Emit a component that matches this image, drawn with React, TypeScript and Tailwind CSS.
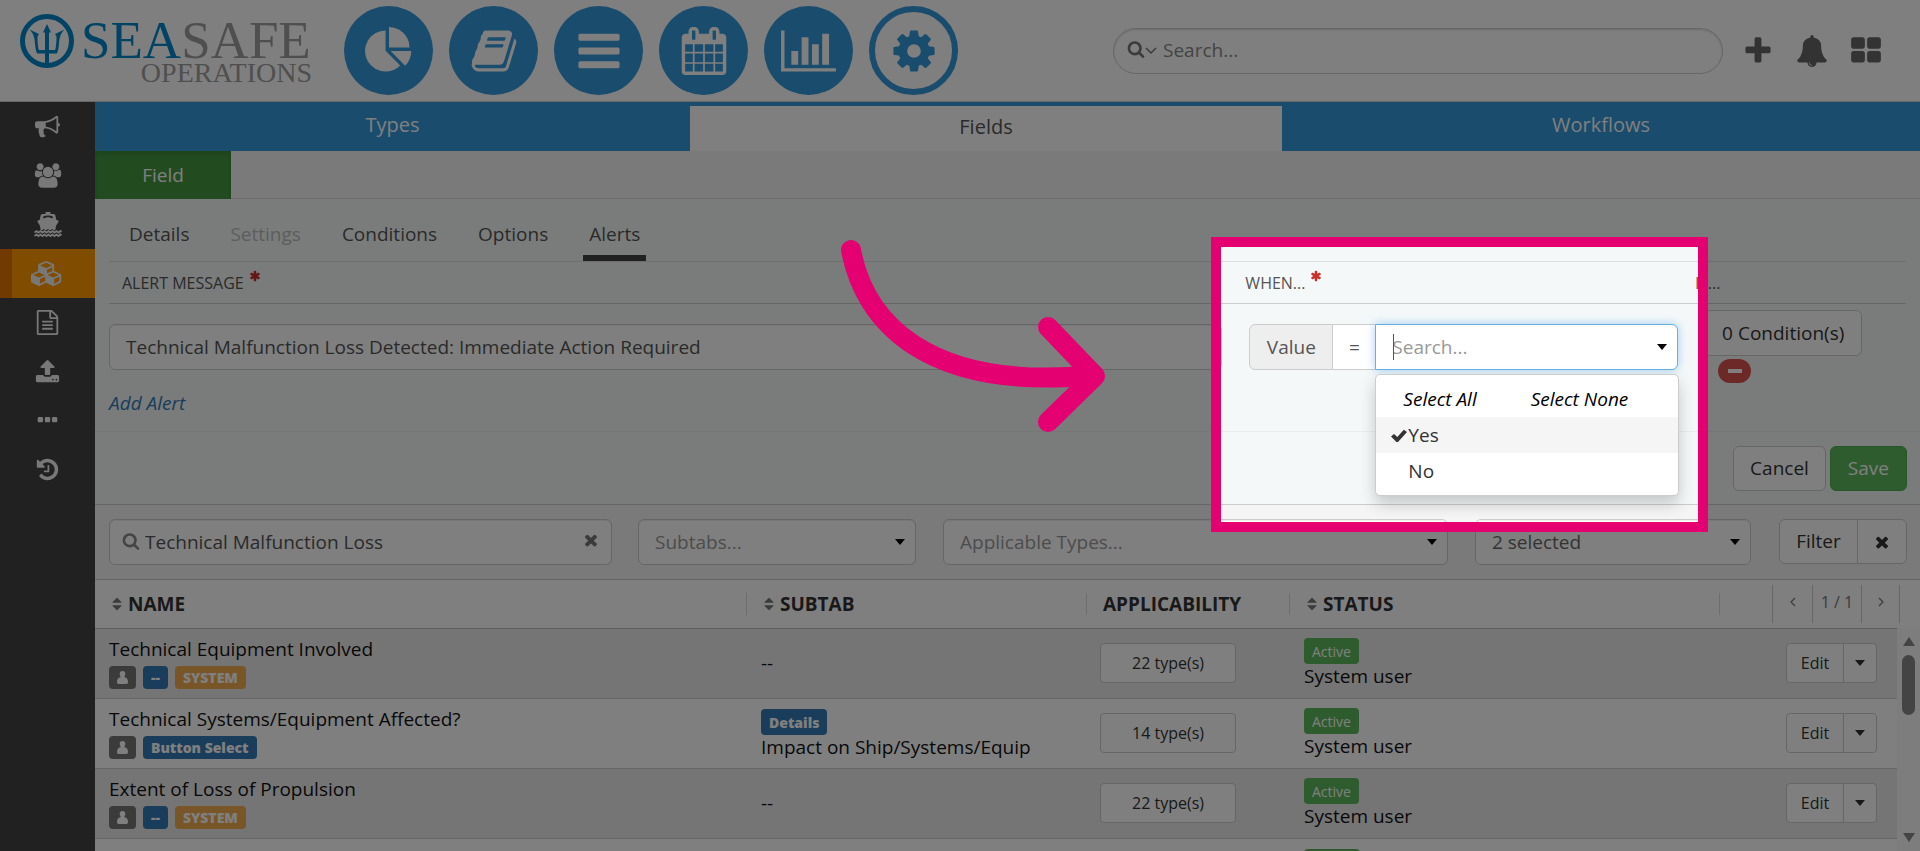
import React from "react";

const ICONS = {
  pie: "M768 890l546 546q-106 108-247.5 168t-298.5 60q-209 0-385.5-103t-279.5-279.5-103-385.5 103-385.5 279.5-279.5 385.5-103v762zm187 6h773q0 157-60 298.5t-168 247.5zm709-128h-768v-768q209 0 385.5 103t279.5 279.5 103 385.5z",
  book: "M1703 478q40 57 18 129l-275 906q-19 64-76.5 107.5t-122.5 43.5h-923q-77 0-148.5-53.5t-99.5-131.5q-24-67-2-127 0-4 3-27t4-37q1-8-3-21.5t-3-19.5q2-11 8-21t16.5-23.5 16.5-23.5q23-38 45-91.5t30-91.5q3-10 .5-30t-.5-28q3-11 17-28t17-23q21-36 42-92t25-90q1-9-2.5-32t.5-28q4-13 22-30.5t22-22.5q19-26 42.5-84.5t27.5-96.5q1-8-3-25.5t-2-26.5q2-8 9-18t18-23 17-21q8-12 16.5-30.5t15-35 16-36 19.5-32 26.5-23.5 36-11.5 47.5 5.5l-1 3q38-9 51-9h761q74 0 114 56t18 130l-274 906q-36 119-71.5 153.5t-128.5 34.5h-869q-27 0-38 15-11 16-1 43 24 70 144 70h923q29 0 56-15.5t35-41.5l300-987q7-22 5-57 38 15 59 43zm-1064 2q-4 13 2 22.5t20 9.5h608q13 0 25.5-9.5t16.5-22.5l21-64q4-13-2-22.5t-20-9.5h-608q-13 0-25.5 9.5t-16.5 22.5zm-83 256q-4 13 2 22.5t20 9.5h608q13 0 25.5-9.5t16.5-22.5l21-64q4-13-2-22.5t-20-9.5h-608q-13 0-25.5 9.5t-16.5 22.5z",
  bars: "M1664 1344v128q0 26-19 45t-45 19h-1408q-26 0-45-19t-19-45v-128q0-26 19-45t45-19h1408q26 0 45 19t19 45zm0-512v128q0 26-19 45t-45 19h-1408q-26 0-45-19t-19-45v-128q0-26 19-45t45-19h1408q26 0 45 19t19 45zm0-512v128q0 26-19 45t-45 19h-1408q-26 0-45-19t-19-45v-128q0-26 19-45t45-19h1408q26 0 45 19t19 45z",
  calendar: "M192 1664h288v-288h-288v288zm352 0h320v-288h-320v288zm-352-352h288v-320h-288v320zm352 0h320v-320h-320v320zm-352-384h288v-288h-288v288zm736 736h320v-288h-320v288zm-384-736h320v-288h-320v288zm768 736h288v-288h-288v288zm-384-352h320v-320h-320v320zm-352-864v-288q0-13-9.5-22.5t-22.5-9.5h-64q-13 0-22.5 9.5t-9.5 22.5v288q0 13 9.5 22.5t22.5 9.5h64q13 0 22.5-9.5t9.5-22.5zm736 864h288v-320h-288v320zm-384-384h320v-288h-320v288zm384 0h288v-288h-288v288zm32-480v-288q0-13-9.5-22.5t-22.5-9.5h-64q-13 0-22.5 9.5t-9.5 22.5v288q0 13 9.5 22.5t22.5 9.5h64q13 0 22.5-9.5t9.5-22.5zm384-64v1280q0 52-38 90t-90 38h-1408q-52 0-90-38t-38-90v-1280q0-52 38-90t90-38h128v-96q0-66 47-113t113-47h64q66 0 113 47t47 113v96h384v-96q0-66 47-113t113-47h64q66 0 113 47t47 113v96h128q52 0 90 38t38 90z",
  chart: "M640 896v512h-256v-512h256zm384-512v1024h-256v-1024h256zm1024 1152v128h-2048v-1536h128v1408h1920zm-640-896v768h-256v-768h256zm384-384v1152h-256v-1152h256z",
  cog: "M1152 896q0-106-75-181t-181-75-181 75-75 181 75 181 181 75 181-75 75-181zm512-109v222q0 12-8 23t-20 13l-185 28q-19 54-39 91 35 50 107 138 10 12 10 25t-9 23q-27 37-99 108t-94 71q-12 0-26-9l-138-108q-44 23-91 38-16 136-29 186-7 28-36 28h-222q-14 0-24.5-8.5t-11.5-21.5l-28-184q-49-16-90-37l-141 107q-10 9-25 9-14 0-25-11-126-114-165-168-7-10-7-23 0-12 8-23 15-21 51-66.5t54-70.5q-27-50-41-99l-183-27q-13-2-21-12.5t-8-23.5v-222q0-12 8-23t19-13l186-28q14-46 39-92-40-57-107-138-10-12-10-24 0-10 9-23 26-36 98.5-107.5t94.5-71.5q13 0 26 10l138 107q44-23 91-38 16-136 29-186 7-28 36-28h222q14 0 24.5 8.5t11.5 21.5l28 184q49 16 90 37l142-107q9-9 24-9 13 0 25 10 129 119 165 170 7 8 7 22 0 12-8 23-15 21-51 66.5t-54 70.5q26 50 41 98l183 28q13 2 21 12.5t8 23.5z",
  search: "M1216 832q0-185-131.5-316.5t-316.5-131.5-316.5 131.5-131.5 316.5 131.5 316.5 316.5 131.5 316.5-131.5 131.5-316.5zm512 832q0 52-38 90t-90 38q-54 0-90-38l-343-342q-179 124-399 124-143 0-273.5-55.5t-225-150-150-225-55.5-273.5 55.5-273.5 150-225 225-150 273.5-55.5 273.5 55.5 225 150 150 225 55.5 273.5q0 220-124 399l343 343q37 37 37 90z",
  plus: "M1600 736v192q0 40-28 68t-68 28h-416v416q0 40-28 68t-68 28h-192q-40 0-68-28t-28-68v-416h-416q-40 0-68-28t-28-68v-192q0-40 28-68t68-28h416v-416q0-40 28-68t68-28h192q40 0 68 28t28 68v416h416q40 0 68 28t28 68z",
  bell: "M912 1696q0-16-16-16-59 0-101.5-42.5t-42.5-101.5q0-16-16-16t-16 16q0 73 51.5 124.5t124.5 51.5q16 0 16-16zm816-288q0 52-38 90t-90 38h-448q0 106-75 181t-181 75-181-75-75-181h-448q-52 0-90-38t-38-90q50-42 91-88t85-119.5 74.5-158.5 50-206 19.5-260q0-152 117-282.5t307-158.5q-8-19-8-39 0-40 28-68t68-28 68 28 28 68q0 20-8 39 190 28 307 158.5t117 282.5q0 139 19.5 260t50 206 74.5 158.5 85 119.5 91 88z",
  grid: "M832 1024v384q0 52-38 90t-90 38h-512q-52 0-90-38t-38-90v-384q0-52 38-90t90-38h512q52 0 90 38t38 90zm0-768v384q0 52-38 90t-90 38h-512q-52 0-90-38t-38-90v-384q0-52 38-90t90-38h512q52 0 90 38t38 90zm896 768v384q0 52-38 90t-90 38h-512q-52 0-90-38t-38-90v-384q0-52 38-90t90-38h512q52 0 90 38t38 90zm0-768v384q0 52-38 90t-90 38h-512q-52 0-90-38t-38-90v-384q0-52 38-90t90-38h512q52 0 90 38t38 90z",
  bullhorn: "M1664 640q53 0 90.5 37.5t37.5 90.5-37.5 90.5-90.5 37.5v384q0 52-38 90t-90 38q-417-347-812-380-58 19-91 66t-31 100.5 40 92.5q-20 33-23 65.5t6 58 33.5 55 48 50 61.5 50.5q-29 58-111.5 83t-168.5 11.5-132-55.5q-7-23-29.5-87.5t-32-94.5-23-89-15-101 3.5-98.5 22-110.5h-122q-66 0-113-47t-47-113v-192q0-66 47-113t113-47h480q435 0 896-384 52 0 90 38t38 90v384zm-128 604v-954q-394 302-768 343v270q377 42 768 341z",
  users: "M657 896q-162 5-265 128h-134q-82 0-138-40.5t-56-118.5q0-353 124-353 6 0 43.5 21t97.5 42.5 119 21.5q67 0 133-23-5 37-5 66 0 159 93 293zm1071 637q0 120-73 189.5t-194 69.5h-874q-121 0-194-69.5t-73-189.5q0-53 3.5-103.5t14-109 26.5-108.5 43-97.5 62-81 85.5-53.5 111.5-20q10 0 43 21.5t73 48 107 48 135 21.5 135-21.5 107-48 73-48 43-21.5q61 0 111.5 20t85.5 53.5 62 81 43 97.5 26.5 108.5 14 109 3.5 103.5zm-1024-1277q0 106-75 181t-181 75-181-75-75-181 75-181 181-75 181 75 75 181zm704 384q0 159-112.5 271.5t-271.5 112.5-271.5-112.5-112.5-271.5 112.5-271.5 271.5-112.5 271.5 112.5 112.5 271.5zm576 225q0 78-56 118.5t-138 40.5h-134q-103-123-265-128 93-134 93-293 0-29-5-66 66 23 133 23 59 0 119-21.5t97.5-42.5 43.5-21q124 0 124 353zm-128-609q0 106-75 181t-181 75-181-75-75-181 75-181 181-75 181 75 75 181z",
  cubes: "M640 1632l384-192v-314l-384 164v342zm-64-454l404-173-404-173-404 173zm1088 454l384-192v-314l-384 164v342zm-64-454l404-173-404-173-404 173zm-448-293l384-165v-266l-384 164v267zm-64-379l441-189-441-189-441 189zm1088 518v416q0 36-19 67t-52 47l-448 224q-25 14-57 14t-57-14l-448-224q-4-2-7-4-2 2-7 4l-448 224q-25 14-57 14t-57-14l-448-224q-33-16-52-47t-19-67v-416q0-38 21.5-70t56.5-48l434-186v-400q0-38 21.5-70t56.5-48l448-192q23-10 50-10t50 10l448 192q35 16 56.5 48t21.5 70v400l434 186q36 16 57 48t21 70z",
  file: "M1596 380q28 28 48 76t20 88v1152q0 40-28 68t-68 28h-1344q-40 0-68-28t-28-68v-1600q0-40 28-68t68-28h896q40 0 88 20t76 48zm-444-244v376h376q-10-29-22-41l-313-313q-12-12-41-22zm384 1528v-1024h-416q-40 0-68-28t-28-68v-416h-768v1536h1280zm-1024-864q0-14 9-23t23-9h704q14 0 23 9t9 23v64q0 14-9 23t-23 9h-704q-14 0-23-9t-9-23v-64zm736 224q14 0 23 9t9 23v64q0 14-9 23t-23 9h-704q-14 0-23-9t-9-23v-64q0-14 9-23t23-9h704zm0 256q14 0 23 9t9 23v64q0 14-9 23t-23 9h-704q-14 0-23-9t-9-23v-64q0-14 9-23t23-9h704z",
  upload: "M1344 1472q0-26-19-45t-45-19-45 19-19 45 19 45 45 19 45-19 19-45zm256 0q0-26-19-45t-45-19-45 19-19 45 19 45 45 19 45-19 19-45zm128-224v320q0 40-28 68t-68 28h-1472q-40 0-68-28t-28-68v-320q0-40 28-68t68-28h427q21 56 70.5 92t110.5 36h256q61 0 110.5-36t70.5-92h427q40 0 68 28t28 68zm-325-648q-17 40-59 40h-256v448q0 26-19 45t-45 19h-256q-26 0-45-19t-19-45v-448h-256q-42 0-59-40-17-39 14-69l448-448q18-19 45-19t45 19l448 448q31 30 14 69z",
  dots: "M576 736v192q0 40-28 68t-68 28h-192q-40 0-68-28t-28-68v-192q0-40 28-68t68-28h192q40 0 68 28t28 68zm512 0v192q0 40-28 68t-68 28h-192q-40 0-68-28t-28-68v-192q0-40 28-68t68-28h192q40 0 68 28t28 68zm512 0v192q0 40-28 68t-68 28h-192q-40 0-68-28t-28-68v-192q0-40 28-68t68-28h192q40 0 68 28t28 68z",
  history: "M1664 896q0 156-61 298t-164 245-245 164-298 61q-172 0-327-72.5t-264-204.5q-7-10-6.5-22.5t8.5-20.5l137-138q10-9 25-9 16 2 23 12 73 95 179 147t225 52q104 0 198.5-40.5t163.5-109.5 109.5-163.5 40.5-198.5-40.5-198.5-109.5-163.5-163.5-109.5-198.5-40.5q-98 0-188 35.5t-160 101.5l137 138q31 30 14 69-17 40-59 40h-448q-26 0-45-19t-19-45v-448q0-42 40-59 39-17 69 14l130 129q107-101 244.5-156.5t284.5-55.5q156 0 298 61t245 164 164 245 61 298zm-640-288v448q0 14-9 23t-23 9h-320q-14 0-23-9t-9-23v-64q0-14 9-23t23-9h224v-352q0-14 9-23t23-9h64q14 0 23 9t9 23z",
  times: "M1490 1322q0 40-28 68l-136 136q-28 28-68 28t-68-28l-294-294-294 294q-28 28-68 28t-68-28l-136-136q-28-28-28-68t28-68l294-294-294-294q-28-28-28-68t28-68l136-136q28-28 68-28t68 28l294 294 294-294q28-28 68-28t68 28l136 136q28 28 28 68t-28 68l-294 294 294 294q28 28 28 68z",
  asterisk: "M1546 1050q46 26 59.5 77.5t-12.5 97.5l-64 110q-26 46-77.5 59.5t-97.5-12.5l-266-153v307q0 52-38 90t-90 38h-128q-52 0-90-38t-38-90v-307l-266 153q-46 26-97.5 12.5t-77.5-59.5l-64-110q-26-46-12.5-97.5t59.5-77.5l266-154-266-154q-46-26-59.5-77.5t12.5-97.5l64-110q26-46 77.5-59.5t97.5 12.5l266 153v-307q0-52 38-90t90-38h128q52 0 90 38t38 90v307l266-153q46-26 97.5-12.5t77.5 59.5l64 110q26 46 12.5 97.5t-59.5 77.5l-266 154z",
  sort: "M1408 1088q0 26-19 45l-448 448q-19 19-45 19t-45-19l-448-448q-19-19-19-45t19-45 45-19h896q26 0 45 19t19 45zm0-384q0 26-19 45t-45 19h-896q-26 0-45-19t-19-45 19-45l448-448q19-19 45-19t45 19l448 448q19 19 19 45z",
};

const Icon = ({ name, w = 1792, className }: { name: keyof typeof ICONS; w?: number; className: string }) => (
  <svg viewBox={`0 0 ${w} 1792`} className={className} fill="currentColor" aria-hidden="true">
    <path d={ICONS[name]} />
  </svg>
);

const Caret = ({ className = "" }: { className?: string }) => (
  <svg viewBox="0 0 10 6" className={`w-[10px] h-[6px] ${className}`} fill="currentColor" aria-hidden="true">
    <path d="M0 0h10L5 6z" />
  </svg>
);

const Ship = () => (
  <svg viewBox="0 0 28 26" className="w-[28px] h-[26px]" fill="currentColor" aria-hidden="true">
    <path d="M11.500 0h5v2h3c1 0 1.700.6 1.900 1.500l.8 4.200 1.800.7c.6.300.8.9.4 1.500l-1.900 3.100c-.8 1.400-.9 2.800-.9 4.500l-1.400 1-2-1.500-2.100 1.500-2.100-1.500-2.100 1.500-2.100-1.500-2 1.500-1.400-1c0-1.700-.1-3.100-.9-4.500L3.600 9.900c-.4-.6-.2-1.200.4-1.500l1.800-.7.8-4.200C6.800 2.600 7.500 2 8.500 2h3zM9.500 4.300L9 6.600 14 5l5 1.600-.5-2.300C15.500 3.300 12.500 3.300 9.500 4.300z" />
    <path d="M.5 20.500l2-1.500 2 1.500 2-1.500 2 1.500 2-1.500 2 1.500 2-1.500 2 1.500 2-1.500 2 1.500 2-1.500 2 1.500 2-1.500 1 .8M.5 24l2-1.500 2 1.500 2-1.500 2 1.500 2-1.500 2 1.500 2-1.500 2 1.500 2-1.500 2 1.500 2-1.500 2 1.500 2-1.500 1 .8" fill="none" stroke="currentColor" strokeWidth="1.800" />
  </svg>
);

const Logo = () => (
  <svg viewBox="0 4 300 84" className="w-[300px] h-[84px] shrink-0" role="img" aria-label="Seasafe Operations">
    <circle cx="33" cy="36" r="24.500" fill="#fff" stroke="#0086c8" strokeWidth="5" />
    <g fill="#0086c8">
      <path d="M33 19l4 8.500h-2V59h-4V27.500h-2z" />
      <path d="M15.500 24.500L25 29l-1.500 2.500c0 5.500.3 9.500 1.300 13.500h6.700v3.500H23c-1.300-3.500-1.700-6.500-2-10-.5-6-1.500-10-5.500-14zM50.500 24.500L41 29l1.500 2.500c0 5.500-.3 9.500-1.300 13.500h-6.700v3.500H43c1.300-3.500 1.700-6.500 2-10 .5-6 1.500-10 5.500-14z" />
    </g>
    <text x="67" y="53" fontSize="53" fontFamily="'Liberation Serif', serif" fill="#0086c8">SEA<tspan fill="#9f9f9f">SAFE</tspan></text>
    <text x="298" y="77" fontSize="28" textAnchor="end" fontFamily="'Liberation Serif', serif" fill="#9f9f9f">OPERATIONS</text>
  </svg>
);

const circle = "w-[89px] h-[89px] rounded-full flex items-center justify-center bg-[#3498db] text-white";
const button = "border border-[#ccc] bg-white text-[#333]";
const field = "w-full h-[46px] rounded-[6px] border border-[#ccc] bg-white text-[#555] shadow-[inset_0_1px_1px_rgba(0,0,0,0.075)] outline-none placeholder:text-[#999]";
const badge = "inline-flex items-center rounded-[4px] px-2 text-[14px] font-extrabold text-white";

const Header = () => (
  <header className="h-[102px] shrink-0 flex items-center bg-white border-b border-[#ccc] pl-[14px] pr-[38px]">
    <Logo />
    <nav className="flex gap-4 ml-[30px]">
      <button className={circle} aria-label="Dashboard"><Icon name="pie" className="w-12 h-12" /></button>
      <button className={circle} aria-label="Logbook"><Icon name="book" className="w-12 h-12" /></button>
      <button className={circle} aria-label="Lists"><Icon name="bars" className="w-12 h-12" /></button>
      <button className={circle} aria-label="Calendar"><Icon name="calendar" className="w-12 h-12" /></button>
      <button className={circle} aria-label="Reports"><Icon name="chart" w={2048} className="w-[55px] h-12" /></button>
      <button className="w-[89px] h-[89px] rounded-full flex items-center justify-center border-[6px] border-[#3498db] text-[#3498db]" aria-label="Settings">
        <Icon name="cog" className="w-12 h-12" />
      </button>
    </nav>
    <label className="ml-auto w-[610px] h-[46px] rounded-full border border-[#ccc] shadow-[inset_0_1px_2px_rgba(0,0,0,0.15)] flex items-center px-[13px] text-[#777]">
      <Icon name="search" className="w-[18px] h-[18px] mb-1" />
      <svg viewBox="0 0 12 8" className="w-3 h-2 mr-[6px]" fill="none" stroke="currentColor" strokeWidth="1.500" aria-hidden="true"><path d="M1 1l5 5 5-5" /></svg>
      <input type="text" aria-label="Search" placeholder="Search..." className="flex-1 outline-none placeholder:text-[#888]" />
    </label>
    <div className="flex items-center gap-[22px] ml-[19px] text-[#666]">
      <button aria-label="Add"><Icon name="plus" className="w-8 h-8" /></button>
      <button aria-label="Notifications"><Icon name="bell" className="w-8 h-8" /></button>
      <button aria-label="Apps"><Icon name="grid" className="w-8 h-8" /></button>
    </div>
  </header>
);

const side = "h-[49px] w-full flex items-center justify-center";

const Sidebar = () => (
  <nav className="w-[95px] shrink-0 bg-[#424242] text-[#f0f0f0]">
    <a href="#" className={side} aria-label="Announcements"><Icon name="bullhorn" className="w-[25px] h-[25px]" /></a>
    <a href="#" className={side} aria-label="Users"><Icon name="users" w={2048} className="w-[28px] h-[25px]" /></a>
    <a href="#" className={side} aria-label="Vessels"><Ship /></a>
    <a href="#" className="h-[49px] w-full flex items-center justify-center border-l-[12px] border-[#e47200] bg-[#ff9900] pr-[14px]" aria-label="Modules">
      <Icon name="cubes" w={2304} className="w-[32px] h-[25px]" />
    </a>
    <a href="#" className={side} aria-label="Documents"><Icon name="file" className="w-[25px] h-[25px]" /></a>
    <a href="#" className={side} aria-label="Upload"><Icon name="upload" className="w-[25px] h-[25px]" /></a>
    <a href="#" className={side} aria-label="More"><Icon name="dots" className="w-[25px] h-[25px]" /></a>
    <a href="#" className={side} aria-label="History"><Icon name="history" className="w-[25px] h-[25px]" /></a>
  </nav>
);

const Required = () => <Icon name="asterisk" className="w-3 h-3 ml-[5px] mb-[14px]" />;

const ValueSelect = () => (
  <div className="relative flex h-[46px] text-[#555]">
    <span className="w-[84px] flex items-center justify-center rounded-l-[6px] border border-[#ccc] bg-[#eee]">Value</span>
    <span className="w-[42px] flex items-center justify-center border-y border-[#ccc] bg-white">=</span>
    <div className="relative flex-1">
      <input
        type="text"
        aria-label="Value"
        placeholder="Search..."
        className="w-full h-full rounded-r-[6px] border border-[#66afe9] bg-white pl-4 outline-none placeholder:text-[#999] shadow-[0_0_10px_rgba(102,175,233,0.6)]"
      />
      <span className="absolute left-[18px] top-[10px] w-px h-[26px] bg-[#555]"></span>
      <Caret className="absolute right-[11px] top-5 text-black" />
      <div className="absolute left-0 top-[50px] -right-px h-[122px] rounded-[5px] border border-[#ccc] bg-white pt-[6px] text-[#333] shadow-[0_8px_16px_rgba(0,0,0,0.2)]">
        <div className="h-[36px] flex items-center italic text-black pl-[27px] gap-[54px]">
          <button>Select All</button>
          <button>Select None</button>
        </div>
        <ul>
          <li className="h-[36px] flex items-center bg-[#f5f5f5] pl-[14px]">
            <svg viewBox="0 0 18 16" className="w-[18px] h-4" fill="currentColor" aria-hidden="true"><path d="M1 9.500l3-2.600 3.300 3.100 6.500-7.200L17 5l-9 10H6.500z" /></svg>
            Yes
          </li>
          <li className="h-[36px] flex items-center pl-[32px]">No</li>
        </ul>
      </div>
    </div>
  </div>
);

const cols = "grid grid-cols-[1125fr_450fr_223fr]";
const tab = "h-[48px] px-[6px] border-b-[6px]";

const AlertForm = () => (
  <section className="shrink-0 bg-[#f4f8f9] border-b border-[#ccc]">
    <div className="px-[14px]">
      <div className="h-[63px] flex items-end gap-[29px] border-b border-[#ddd] pl-[14px] text-[#555]">
        <button className={`${tab} border-transparent`}>Details</button>
        <button className={`${tab} border-transparent text-[#bbb]`} disabled>Settings</button>
        <button className={`${tab} border-transparent`}>Conditions</button>
        <button className={`${tab} border-transparent`}>Options</button>
        <button className={`${tab} border-[#424242]`}>Alerts</button>
      </div>
      <div className={`${cols} h-[42px] border-b border-[#ccc] text-[16px] text-[#555]`}>
        <span className="flex items-center pl-[13px]">ALERT MESSAGE<span className="text-[#c9302c]"><Required /></span></span>
        <span className="flex items-center pl-3">WHEN...<span className="text-[#c9302c]"><Required /></span></span>
        <span className="flex items-center pl-3">IF...</span>
      </div>
      <div className={`${cols} pt-5 h-[86px]`}>
        <div className="pr-[11px]">
          <input type="text" aria-label="Alert message" defaultValue="Technical Malfunction Loss Detected: Immediate Action Required" className={`${field} px-4`} />
        </div>
        <div className="pl-4 pr-[5px]"><ValueSelect /></div>
        <div className="pl-[21px] -mt-[14px]">
          <button className={`${button} h-[46px] rounded-[6px] px-[17px]`}>0 Condition(s)</button>
          <button className="ml-[14px] mt-[3px] w-[33px] h-[24px] rounded-full bg-[#d9534f] flex items-center justify-center" aria-label="Remove alert">
            <span className="w-[14px] h-1 bg-white"></span>
          </button>
        </div>
      </div>
      <a href="#" className="block h-[41px] leading-[26px] italic text-[#337ab7]">Add Alert</a>
    </div>
    <div className="h-[73px] border-t border-[#e9edee] flex items-start justify-end gap-1 px-[13px] pt-[14px]">
      <button className={`${button} h-[45px] rounded-[6px] px-4`}>Cancel</button>
      <button className="h-[45px] rounded-[6px] px-[17px] bg-[#5cb85c] border border-[#4cae4c] text-white">Save</button>
    </div>
  </section>
);

const Drop = ({ label, className, tone }: { label: string; className: string; tone: string }) => (
  <div className={`relative ${className}`}>
    <select aria-label={label} className={`${field} ${tone} appearance-none px-4`}>
      <option>{label}</option>
    </select>
    <Caret className="absolute right-[11px] top-5 text-black pointer-events-none" />
  </div>
);

const Filters = () => (
  <form className="h-[75px] shrink-0 flex items-start bg-[#f5f5f5] border-b border-[#ccc] pt-[14px] pl-[14px] pr-[13px]">
    <div className="relative flex-[503] mr-[26px]">
      <Icon name="search" className="absolute left-[13px] top-[13px] w-[18px] h-[18px] text-[#888]" />
      <input type="text" aria-label="Search fields" defaultValue="Technical Malfunction Loss" className={`${field} pl-[35px] pr-10`} />
      <button type="button" className="absolute right-3 top-3 text-[#777]" aria-label="Clear search"><Icon name="times" className="w-[18px] h-[18px]" /></button>
    </div>
    <Drop label="Subtabs..." className="flex-[278] mr-[27px]" tone="text-[#999]" />
    <Drop label="Applicable Types..." className="flex-[505] mr-[27px]" tone="text-[#999]" />
    <Drop label="2 selected" className="flex-[276] mr-[28px]" tone="text-[#666]" />
    <button type="button" className={`${button} h-[45px] w-[79px] rounded-l-[6px]`}>Filter</button>
    <button type="button" className={`${button} -ml-px h-[45px] w-[50px] rounded-r-[6px] flex items-center justify-center`} aria-label="Clear filter">
      <Icon name="times" className="w-[18px] h-[18px]" />
    </button>
  </form>
);

type Row = { name: string; kind: string; system: boolean; subtab?: string; types: string };

const rows: Row[] = [
  { name: "Technical Equipment Involved", kind: "--", system: true, types: "22 type(s)" },
  { name: "Technical Systems/Equipment Affected?", kind: "Button Select", system: false, subtab: "Impact on Ship/Systems/Equip", types: "14 type(s)" },
  { name: "Extent of Loss of Propulsion", kind: "--", system: true, types: "22 type(s)" },
];

const head = "h-[22px] flex items-center";

const Sort = () => <Icon name="sort" className="w-[16px] h-[16px] text-[#777] mr-[3px]" />;

const FieldTable = () => (
  <div className="relative flex-1 min-h-0">
    <table className="w-full table-fixed bg-white text-left text-[#111]">
      <colgroup>
        <col />
        <col className="w-[340px]" />
        <col className="w-[203px]" />
        <col className="w-[430px]" />
        <col className="w-[201px]" />
      </colgroup>
      <thead>
        <tr className="h-[48px] border-b border-[#bbb] text-[#333]">
          <th><div className={`${head} pl-[14px]`}><Sort />NAME</div></th>
          <th><div className={`${head} pl-[14px] border-l border-[#ddd]`}><Sort />SUBTAB</div></th>
          <th><div className={`${head} pl-4 border-l border-[#ddd]`}>APPLICABILITY</div></th>
          <th><div className={`${head} pl-[14px] border-l border-[#ddd]`}><Sort />STATUS</div></th>
          <th>
            <div className="flex items-center justify-between pr-5">
              <span className="h-[22px] border-l border-[#ddd]"></span>
              <div className="h-[38px] flex items-stretch font-normal text-[16px] text-[#777] border-x border-[#ccc]">
                <button className="w-[39px] flex items-center justify-center pb-1" aria-label="Previous page">
                  <svg viewBox="0 0 6 10" className="w-[6px] h-[10px]" fill="none" stroke="currentColor" strokeWidth="1.200"><path d="M5 1L1 5l4 4" /></svg>
                </button>
                <span className="w-[50px] flex items-center justify-center border-x border-[#ccc] pb-1">1 / 1</span>
                <button className="w-[37px] flex items-center justify-center pb-1" aria-label="Next page">
                  <svg viewBox="0 0 6 10" className="w-[6px] h-[10px]" fill="none" stroke="currentColor" strokeWidth="1.200"><path d="M1 1l4 4-4 4" /></svg>
                </button>
              </div>
            </div>
          </th>
        </tr>
      </thead>
      <tbody>
        {rows.map((r) => (
          <tr key={r.name} className="h-[70px] border-b border-[#ccc] odd:bg-[#ebebeb]">
            <td className="pl-[14px]">
              <div className="leading-6">{r.name}</div>
              <div className="flex gap-[7px] mt-[5px] h-[23px]">
                <span className={`${badge} bg-[#777]`}>
                  <svg viewBox="0 0 11 13" className="w-[11px] h-[13px]" fill="currentColor" aria-hidden="true"><path d="M5.500 0a2.800 2.800 0 0 1 2.800 2.800c0 1-.2 1.700-.8 2.400v1C10 6.600 11 8.500 11 11c0 1.200-.6 2-1.600 2H1.600C.6 13 0 12.200 0 11c0-2.500 1-4.400 3.500-4.800v-1C2.900 4.500 2.700 3.800 2.700 2.800A2.800 2.800 0 0 1 5.500 0z" /></svg>
                </span>
                <span className={`${badge} bg-[#337ab7]`}>{r.kind}</span>
                {r.system && <span className={`${badge} bg-[#f0ad4e]`}>SYSTEM</span>}
              </div>
            </td>
            <td className="pl-[15px]">
              {r.subtab ? (
                <>
                  <span className={`${badge} h-[26px] bg-[#337ab7]`}>Details</span>
                  <div className="leading-6">{r.subtab}</div>
                </>
              ) : "--"}
            </td>
            <td className="pl-[14px]">
              <button className={`${button} w-[136px] h-[40px] rounded-[4px] text-[16px]`}>{r.types}</button>
            </td>
            <td className="pl-[15px]">
              <span className="flex items-center w-fit h-[26px] rounded-[4px] px-2 text-[14px] text-white bg-[#5cb85c]">Active</span>
              <div className="leading-6">System user</div>
            </td>
            <td className="pr-[43px]">
              <div className="flex justify-end text-[16px]">
                <button className={`${button} w-[58px] h-[40px] rounded-l-[4px]`}>Edit</button>
                <button className={`${button} -ml-px w-[34px] h-[40px] rounded-r-[4px] flex items-center justify-center`} aria-label="More actions"><Caret /></button>
              </div>
            </td>
          </tr>
        ))}
        <tr className="h-[70px]">
          <td colSpan={3}></td>
          <td className="pl-[15px] pt-[10px] align-top">
            <div className="w-[56px] h-[26px] rounded-[4px] bg-[#5cb85c]"></div>
          </td>
          <td></td>
        </tr>
      </tbody>
    </table>
    {/* scrollbar of the list */}
    <div className="absolute right-0 top-[48px] bottom-0 w-[23px] bg-[#fbfbfb] flex flex-col items-center pt-[9px] pb-[9px] text-[#888]">
      <svg viewBox="0 0 12 9" className="w-3 h-[9px]" fill="currentColor"><path d="M6 0l6 9H0z" /></svg>
      <div className="mt-[9px] w-[13px] h-[60px] rounded-full bg-[#888]"></div>
      <svg viewBox="0 0 12 9" className="w-3 h-[9px] mt-auto" fill="currentColor"><path d="M6 9l6-9H0z" /></svg>
    </div>
  </div>
);

const App = () => {
  return (
    <div className="relative h-screen overflow-hidden flex flex-col bg-white font-['Open_Sans','Noto_Sans',sans-serif] text-[19px]">
      <Header />
      <div className="flex-1 min-h-0 flex">
        <Sidebar />
        <main className="flex-1 min-w-0 flex flex-col">
          <nav className="h-[49px] shrink-0 grid grid-cols-[595fr_592fr_638fr] bg-[#3498db] text-[20px] text-white">
            <button className="pb-1">Types</button>
            <button className="mt-1 pb-1 bg-white text-[#555]">Fields</button>
            <button className="pb-1">Workflows</button>
          </nav>
          <div className="h-[48px] shrink-0 bg-[#f5f5f5] border-b border-[#ddd]">
            <button className="h-[48px] w-[136px] bg-[#449741] text-white shadow-[inset_0_3px_5px_rgba(0,0,0,0.125)]">Field</button>
          </div>
          <AlertForm />
          <Filters />
          <FieldTable />
        </main>
      </div>

      {/* spotlight: everything outside the frame is dimmed by its shadow */}
      <div className="absolute right-[212px] top-[237px] w-[497px] h-[295px] border-[10px] border-[#e50072] shadow-[0_0_0_2000px_rgba(0,0,0,0.5)] pointer-events-none"></div>
      <svg viewBox="0 0 280 210" className="absolute right-[800px] top-[230px] w-[280px] h-[210px] pointer-events-none" fill="none" stroke="#e50072" strokeWidth="20" strokeLinecap="round" strokeLinejoin="round" aria-hidden="true">
        <path d="M11 20C24 90 85 162 254 145" />
        <path d="M208 97l47 49-47 46" />
      </svg>
    </div>
  );
};

export default App;
